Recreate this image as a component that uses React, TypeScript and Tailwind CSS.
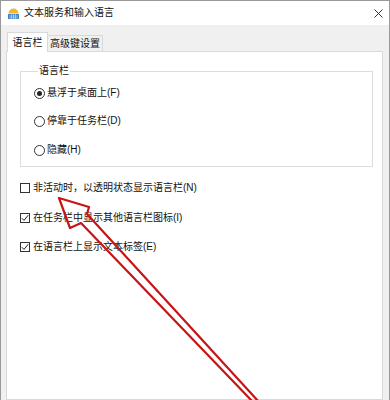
import React from "react";

const radios = [
  { label: "悬浮于桌面上(F)", checked: true, gap: "mt-0" },
  { label: "停靠于任务栏(D)", checked: false, gap: "mt-[14px]" },
  { label: "隐藏(H)", checked: false, gap: "mt-[15px]" },
];

const checks = [
  { label: "非活动时，以透明状态显示语言栏(N)", checked: false, gap: "mt-[14px]" },
  { label: "在任务栏中显示其他语言栏图标(I)", checked: true, gap: "mt-[16px]" },
  { label: "在语言栏上显示文本标签(E)", checked: true, gap: "mt-[15px]" },
];

function AppIcon() {
  return (
    <svg width="13" height="13" viewBox="0 0 13 13">
      <path d="M1.5 6.5 A5 5 0 0 1 11.5 6.5 Z" fill="#f2b632" />
      <rect x="1" y="7" width="11" height="5" rx="0.5" fill="#3d7fc4" />
      <path d="M2 9h9M2 10.8h9M4.5 7v5M6.5 7v5M8.5 7v5" stroke="#cfe3f7" strokeWidth="0.6" />
    </svg>
  );
}

function Radio({ checked }: { checked: boolean }) {
  return (
    <span className="w-[11px] h-[11px] rounded-full border border-[#333] bg-white flex items-center justify-center shrink-0">
      {checked && <span className="w-[5px] h-[5px] rounded-full bg-[#222]" />}
    </span>
  );
}

function Check({ checked }: { checked: boolean }) {
  return (
    <span className="w-[10px] h-[10px] border border-[#333] bg-white flex items-center justify-center shrink-0">
      {checked && (
        <svg width="8" height="8" viewBox="0 0 8 8">
          <path d="M0.8 4.2 L3 6.4 L7.2 1.2" fill="none" stroke="#222" strokeWidth="1" />
        </svg>
      )}
    </span>
  );
}

export default function App() {
  return (
    <div className="w-[390px] h-[400px] relative overflow-hidden bg-[#f0f0f0] border-t border-l border-r border-[#999] flex flex-col text-[10px] text-[#111] font-['Liberation_Sans','Noto_Sans_CJK_SC',sans-serif]">
      {/* title bar */}
      <div className="h-[24px] bg-white flex items-center pl-[6px] shrink-0">
        <AppIcon />
        <span className="ml-[4px] leading-none">文本服务和输入语言</span>
        <svg className="ml-auto mr-[6px]" width="9" height="9" viewBox="0 0 9 9">
          <path d="M0.5 0.5 L8.5 8.5 M8.5 0.5 L0.5 8.5" stroke="#333" strokeWidth="1" />
        </svg>
      </div>

      {/* tabs */}
      <div className="flex items-end h-[20px] mt-[7px] pl-[6px] shrink-0">
        <div className="relative z-10 h-[20px] w-[41px] bg-white border-t border-l border-r border-[#d9d9d9] flex items-center justify-center">
          语言栏
        </div>
        <div className="h-[16px] mb-[1px] w-[55px] bg-[#f0f0f0] border-t border-r border-[#d9d9d9] flex items-center justify-center">
          高级键设置
        </div>
      </div>

      {/* panel */}
      <div className="-mt-px ml-[5px] w-[377px] flex-1 bg-white border border-[#d9d9d9] pl-[13px]">
        <fieldset className="mt-[12px] w-[353px] border border-[#dcdcdc] pl-[13px] pt-[8px] pb-[9px]">
          <legend className="ml-[4px] px-[1px] leading-[14px]">语言栏</legend>
          {radios.map((r) => (
            <div key={r.label} className={`h-[14px] flex items-center ${r.gap}`}>
              <Radio checked={r.checked} />
              <span className="ml-[2px] leading-none">{r.label}</span>
            </div>
          ))}
        </fieldset>

        {checks.map((c) => (
          <div key={c.label} className={`h-[14px] flex items-center ${c.gap}`}>
            <Check checked={c.checked} />
            <span className="ml-[3px] leading-none">{c.label}</span>
          </div>
        ))}
      </div>

      {/* red annotation arrow */}
      <svg className="absolute left-0 top-0 pointer-events-none" width="390" height="400" viewBox="0 0 390 400">
        <polyline
          points="252,401 80,222 69,227 58,197 88,206 86,213 258,401"
          fill="none"
          stroke="#c81414"
          strokeWidth="2.2"
          strokeLinejoin="round"
        />
      </svg>
    </div>
  );
}
